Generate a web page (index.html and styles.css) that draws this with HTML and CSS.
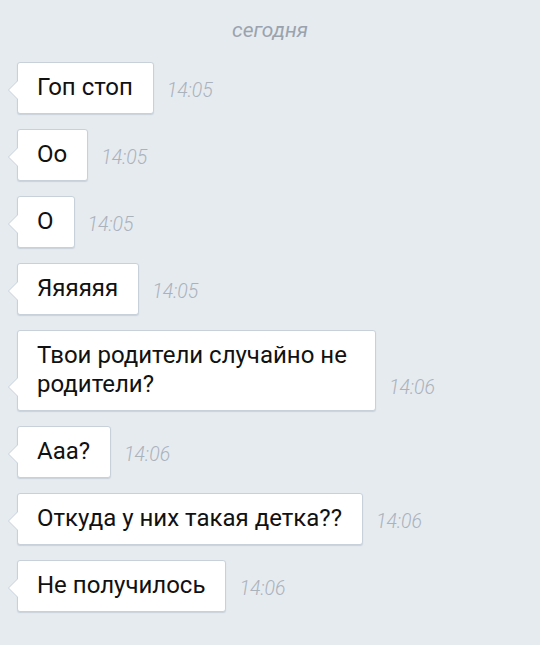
FILE: index.html
```html
<!DOCTYPE html>
<html lang="ru">
  <head>
    <meta charset="UTF-8" />
    <meta name="viewport" content="width=device-width, initial-scale=1.0" />
    <title>Диалог</title>
    <link rel="stylesheet" href="styles.css">
  </head>
  <body>
    <div class="chat">
      <div class="date">сегодня</div>

      <div class="msg">
        <div class="bubble">Гоп стоп</div>
        <span class="time">14:05</span>
      </div>
      <div class="msg">
        <div class="bubble">Оо</div>
        <span class="time">14:05</span>
      </div>
      <div class="msg">
        <div class="bubble">О</div>
        <span class="time">14:05</span>
      </div>
      <div class="msg">
        <div class="bubble">Яяяяяя</div>
        <span class="time">14:05</span>
      </div>
      <div class="msg">
        <div class="bubble">Твои родители случайно не родители?</div>
        <span class="time">14:06</span>
      </div>
      <div class="msg">
        <div class="bubble">Ааа?</div>
        <span class="time">14:06</span>
      </div>
      <div class="msg">
        <div class="bubble">Откуда у них такая детка??</div>
        <span class="time">14:06</span>
      </div>
      <div class="msg">
        <div class="bubble">Не получилось</div>
        <span class="time">14:06</span>
      </div>
    </div>
  </body>
</html>
```

FILE: styles.css
```css
body {
  margin: 0;
  background-color: #e6ebf0;
  font-family: Roboto, "Noto Sans", sans-serif;
}

.chat {
  padding: 17px 17px 20px;
  display: flex;
  flex-direction: column;
  gap: 15px;
}

.date {
  text-align: center;
  font-size: 21px;
  line-height: 26px;
  font-style: italic;
  color: #9aa3ad;
  margin-bottom: 4px;
}

.msg {
  display: flex;
  align-items: flex-end;
}

.bubble {
  position: relative;
  box-sizing: border-box;
  max-width: 359px;
  padding: 10px 20px 11px 19px;
  background-color: #ffffff;
  border: 1px solid #c8d1da;
  border-radius: 3px;
  box-shadow: 0 1px 1px rgba(120, 135, 150, 0.25);
  font-size: 24px;
  line-height: 29px;
  color: #111111;
}

/* tail: border layer, then white fill */
.bubble::before,
.bubble::after {
  content: "";
  position: absolute;
  width: 0;
  height: 0;
  border-style: solid;
  border-color: transparent;
}

.bubble::before {
  left: -10px;
  bottom: 13px;
  border-width: 10px 10px 10px 0;
  border-right-color: #c8d1da;
}

.bubble::after {
  left: -9px;
  bottom: 13px;
  border-width: 10px 10px 10px 0;
  border-right-color: #ffffff;
}

.time {
  margin-left: 13px;
  padding-bottom: 9px;
  font-size: 19.5px;
  line-height: 29px;
  font-weight: 300;
  font-style: italic;
  color: #aab2bc;
}
```
